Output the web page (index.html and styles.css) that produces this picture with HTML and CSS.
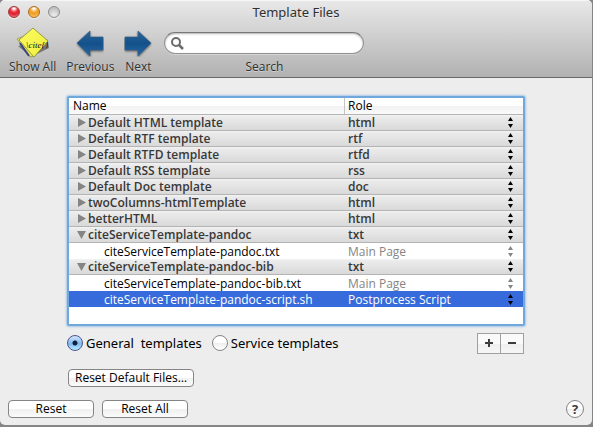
FILE: index.html
```html
<!DOCTYPE html>
<html lang="en">
<head>
<meta charset="utf-8">
<title>Template Files</title>
<link rel="stylesheet" href="styles.css">
</head>
<body>
<svg class="defs" aria-hidden="true">
  <defs>
    <linearGradient id="blue" x1="0" y1="0" x2="0" y2="1"><stop offset="0" stop-color="#2c6494"/><stop offset=".5" stop-color="#13518c"/><stop offset="1" stop-color="#2866a0"/></linearGradient>
    <linearGradient id="note" x1="0" y1="0" x2="1" y2="1"><stop offset="0" stop-color="#fbfb62"/><stop offset="1" stop-color="#f0ee3c"/></linearGradient>
    <symbol id="closed" viewBox="0 0 9 9"><path d="M1 0v9l8-4.500z"/></symbol>
    <symbol id="open" viewBox="0 0 9 9"><path d="M0 1h9L4.500 9z"/></symbol>
    <symbol id="updown" viewBox="0 0 5 11"><path d="M2.500 0L5 4H0zM2.500 11L5 7H0z"/></symbol>
  </defs>
</svg>
<div class="window">
  <header class="titlebar">
    <div class="caption">
      <div class="lights">
        <button class="light red" aria-label="Close"></button>
        <button class="light amber" aria-label="Minimize"></button>
        <button class="light" aria-label="Zoom"></button>
      </div>
      <h1>Template Files</h1>
    </div>
    <div class="toolbar">
      <button class="tool">
        <svg width="34" height="32" viewBox="0 0 34 32"><path d="M2 19l13 11 18-9-2-9z" fill="#777"/><path d="M1 12l13 18 4-1L8 9z" fill="#e7e65a" stroke="#8b8945" stroke-width=".7"/><path d="M4 16l9 13" stroke="#39427d" stroke-width="2"/><path d="M17 1l15 13-14 16L3 13z" fill="url(#note)" stroke="#87863c" stroke-width=".8"/><text x="10" y="21" class="cite">\cite{}</text></svg>
        <span>Show All</span>
      </button>
      <button class="tool">
        <svg width="28" height="28" viewBox="0 0 28 28"><path class="arrow" d="M1 14L14 2v6h13v13H14v6z"/></svg>
        <span>Previous</span>
      </button>
      <button class="tool">
        <svg width="28" height="28" viewBox="0 0 28 28"><path class="arrow" d="M27 14L14 2v6H1v13h13v6z"/></svg>
        <span>Next</span>
      </button>
      <div class="search">
        <div class="field">
          <svg width="14" height="14" viewBox="0 0 14 14" fill="none" stroke="#6c6c6c" stroke-width="2"><circle cx="6" cy="6" r="4"/><path d="M9 9l4 4" stroke-width="2.500"/></svg>
          <input id="search" type="text">
        </div>
        <label for="search">Search</label>
      </div>
    </div>
  </header>
  <main>
    <section class="panel">
      <div class="list">
        <table>
          <colgroup><col class="name"><col></colgroup>
          <thead><tr><th>Name</th><th>Role</th></tr></thead>
          <tbody>
            <tr class="group"><td><button class="twist" aria-label="Expand"><svg><use href="#closed"/></svg></button>Default HTML template</td><td><div class="role"><select aria-label="Role"><option>html</option></select><svg><use href="#updown"/></svg></div></td></tr>
            <tr class="group"><td><button class="twist" aria-label="Expand"><svg><use href="#closed"/></svg></button>Default RTF template</td><td><div class="role"><select aria-label="Role"><option>rtf</option></select><svg><use href="#updown"/></svg></div></td></tr>
            <tr class="group"><td><button class="twist" aria-label="Expand"><svg><use href="#closed"/></svg></button>Default RTFD template</td><td><div class="role"><select aria-label="Role"><option>rtfd</option></select><svg><use href="#updown"/></svg></div></td></tr>
            <tr class="group"><td><button class="twist" aria-label="Expand"><svg><use href="#closed"/></svg></button>Default RSS template</td><td><div class="role"><select aria-label="Role"><option>rss</option></select><svg><use href="#updown"/></svg></div></td></tr>
            <tr class="group"><td><button class="twist" aria-label="Expand"><svg><use href="#closed"/></svg></button>Default Doc template</td><td><div class="role"><select aria-label="Role"><option>doc</option></select><svg><use href="#updown"/></svg></div></td></tr>
            <tr class="group"><td><button class="twist" aria-label="Expand"><svg><use href="#closed"/></svg></button>twoColumns-htmlTemplate</td><td><div class="role"><select aria-label="Role"><option>html</option></select><svg><use href="#updown"/></svg></div></td></tr>
            <tr class="group"><td><button class="twist" aria-label="Expand"><svg><use href="#closed"/></svg></button>betterHTML</td><td><div class="role"><select aria-label="Role"><option>html</option></select><svg><use href="#updown"/></svg></div></td></tr>
            <tr class="group"><td><button class="twist" aria-label="Collapse"><svg><use href="#open"/></svg></button>citeServiceTemplate-pandoc</td><td><div class="role"><select aria-label="Role"><option>txt</option></select><svg><use href="#updown"/></svg></div></td></tr>
            <tr class="file"><td>citeServiceTemplate-pandoc.txt</td><td><div class="role"><select aria-label="Role" disabled><option>Main Page</option></select><svg><use href="#updown"/></svg></div></td></tr>
            <tr class="group"><td><button class="twist" aria-label="Collapse"><svg><use href="#open"/></svg></button>citeServiceTemplate-pandoc-bib</td><td><div class="role"><select aria-label="Role"><option>txt</option></select><svg><use href="#updown"/></svg></div></td></tr>
            <tr class="file"><td>citeServiceTemplate-pandoc-bib.txt</td><td><div class="role"><select aria-label="Role" disabled><option>Main Page</option></select><svg><use href="#updown"/></svg></div></td></tr>
            <tr class="file selected"><td>citeServiceTemplate-pandoc-script.sh</td><td><div class="role"><select aria-label="Role"><option>Postprocess Script</option></select><svg><use href="#updown"/></svg></div></td></tr>
          </tbody>
        </table>
      </div>
      <div class="options">
        <label><input type="radio" name="kind" checked>General&nbsp; templates</label>
        <label><input type="radio" name="kind">Service templates</label>
        <div class="segments">
          <button aria-label="Add"><svg width="8" height="8" viewBox="0 0 8 8"><path d="M0 4h8M4 0v8"/></svg></button>
          <button aria-label="Remove"><svg width="8" height="8" viewBox="0 0 8 8"><path d="M0 4h8"/></svg></button>
        </div>
      </div>
      <button class="push wide">Reset Default Files…</button>
    </section>
    <footer>
      <button class="push">Reset</button>
      <button class="push">Reset All</button>
      <button class="help" aria-label="Help">?</button>
    </footer>
  </main>
</div>
</body>
</html>
```
FILE: styles.css
```css
* { box-sizing: border-box; }
body {
  margin: 0;
  min-height: 100vh;
  display: flex;
  padding: 0 1px 2px 0;
  background: #858585;
  color: #000;
  font: 12px/16px "Open Sans", "Noto Sans", sans-serif;
}
button, input, select { font: inherit; color: inherit; margin: 0; padding: 0; border: 0; background: none; }
.defs { position: absolute; width: 0; height: 0; }
.window { flex: 1; display: flex; flex-direction: column; background: #ededed; border-radius: 5px; overflow: hidden; }

.titlebar {
  height: 78px;
  background: linear-gradient(#e8e8e8, #b1b1b1);
  border-top: 1px solid #f6f6f6;
  border-bottom: 1px solid #686868;
  color: #303030;
  text-shadow: 0 1px 0 rgba(255, 255, 255, .4);
}
.caption { display: grid; grid-template-columns: 1fr auto 1fr; align-items: center; height: 22px; padding-left: 8px; padding-right: 8px; }
.lights { display: flex; gap: 8px; }
.light {
  width: 12px; height: 12px; border-radius: 50%;
  border: 1px solid #8d8d8d;
  background: radial-gradient(circle at 50% 80%, #eee, #c2c2c2 70%);
  box-shadow: 0 1px 0 rgba(255, 255, 255, .6);
}
.red { border-color: #a33439; background: radial-gradient(circle at 50% 15%, #fff 5%, #f0303d 38%, #dc2232 60%, #ff9da0); }
.amber { border-color: #a86a1c; background: radial-gradient(circle at 50% 15%, #fff 5%, #f5a52c 38%, #f0a02c 60%, #ffe680); }
h1 { margin: 0; font: 400 13px/20px "Noto Sans", sans-serif; }
.toolbar { display: flex; gap: 10px; padding-left: 9px; padding-top: 4px; }
.tool { display: grid; grid-template-rows: 32px 16px; justify-items: center; align-items: center; text-shadow: inherit; }
.cite { font: italic 9px "Liberation Serif", serif; fill: #111; text-shadow: none; }
.arrow { fill: url(#blue); stroke: #315f88; stroke-width: .6; filter: drop-shadow(0 1px 1px rgba(0, 0, 0, .55)); }
.search { display: grid; grid-template-rows: 32px 16px; justify-items: center; align-items: center; padding-left: 2px; }
.field {
  display: flex; align-items: center; gap: 4px;
  width: 200px; height: 22px; padding: 0 8px 0 5px;
  border: 1px solid #929292; border-top-color: #777; border-radius: 11px;
  background: #fff;
  box-shadow: inset 0 1px 2px rgba(0, 0, 0, .3), 0 1px 0 rgba(255, 255, 255, .3);
}
.field input { flex: 1; min-width: 0; outline: 0; }

main { flex: 1; display: flex; flex-direction: column; justify-content: space-between; padding: 18px 8px 7px; }
.panel { padding: 0 59px; }
.list {
  min-height: 230px;
  border: 2px solid #70a8dc; border-radius: 2px;
  box-shadow: 0 0 2px 1px #a9c9e8;
  background: #fff;
}
table { width: 100%; border-collapse: separate; border-spacing: 0; table-layout: fixed; }
col.name { width: 275px; }
th { height: 17px; padding: 0 4px; text-align: left; font-weight: 400; line-height: 16px; border-bottom: 1px solid #b4b4b4; background: linear-gradient(#fff 50%, #f2f2f2 50%, #fafafa); }
th + th { box-shadow: inset 1px 0 #c4c4c4; }
td { height: 16px; padding: 0 4px; line-height: 15px; white-space: nowrap; }
td + td { padding: 0 10px 0 4px; }
.group td { border-bottom: 1px solid #b4b4b4; background: linear-gradient(#f3f3f3, #ebebeb 2px, #d9d9d9); font-weight: 600; color: #383838; }
.file td:first-child { padding-left: 35px; }
.selected td { background: #376bdb; color: #fff; }
.twist { width: 9px; height: 9px; margin: 0 2px 0 4px; vertical-align: baseline; fill: #858585; }
.twist svg { display: block; width: 9px; height: 9px; }
.role { display: flex; align-items: center; height: 15px; }
.role select { flex: 1; height: 15px; line-height: 15px; appearance: none; opacity: 1; }
.role select:disabled { color: #858585; }
.role svg { width: 5px; height: 11px; fill: #000; }
.role select:disabled + svg { fill: #858585; }

.options { display: flex; align-items: center; height: 20px; margin: 7px 1px 0 0; gap: 10px; font: 13px/16px "Noto Sans", sans-serif; }
.options label { display: flex; align-items: center; gap: 3px; }
.options input {
  appearance: none; width: 16px; height: 16px; border-radius: 50%;
  border: 1px solid #858585;
  background: linear-gradient(#fff 50%, #eee 50%, #fff);
}
.options input:checked { border-color: #4c5590; background: radial-gradient(circle, #10203c 2px, transparent 3px), linear-gradient(#d5e7fa, #7db8ef 55%, #b9ecff); }
.segments { display: flex; margin-left: auto; }
.segments button {
  display: grid; place-items: center; width: 24px; height: 21px;
  border: 1px solid #a0a0a0; background: linear-gradient(#fafafa 50%, #efefef 50%, #f6f6f6);
}
.segments button + button { margin-left: -1px; }
.segments path { stroke: #3c3c3c; stroke-width: 2; }
.push {
  width: 86px; height: 18px; line-height: 16px;
  border: 1px solid #858585; border-radius: 4px;
  background: linear-gradient(#fff 50%, #f0f0f0 50%, #fbfbfb);
}
.wide { display: block; width: 126px; margin: 16px 1px 0; }
footer { display: flex; align-items: center; gap: 8px; }
.help {
  width: 18px; height: 18px; margin-left: auto; border-radius: 50%;
  border: 1px solid #858585; background: linear-gradient(#fff 50%, #eee 50%, #fff);
  font-size: 13px; line-height: 16px; font-weight: 700; color: #3c3c3c;
}
```
